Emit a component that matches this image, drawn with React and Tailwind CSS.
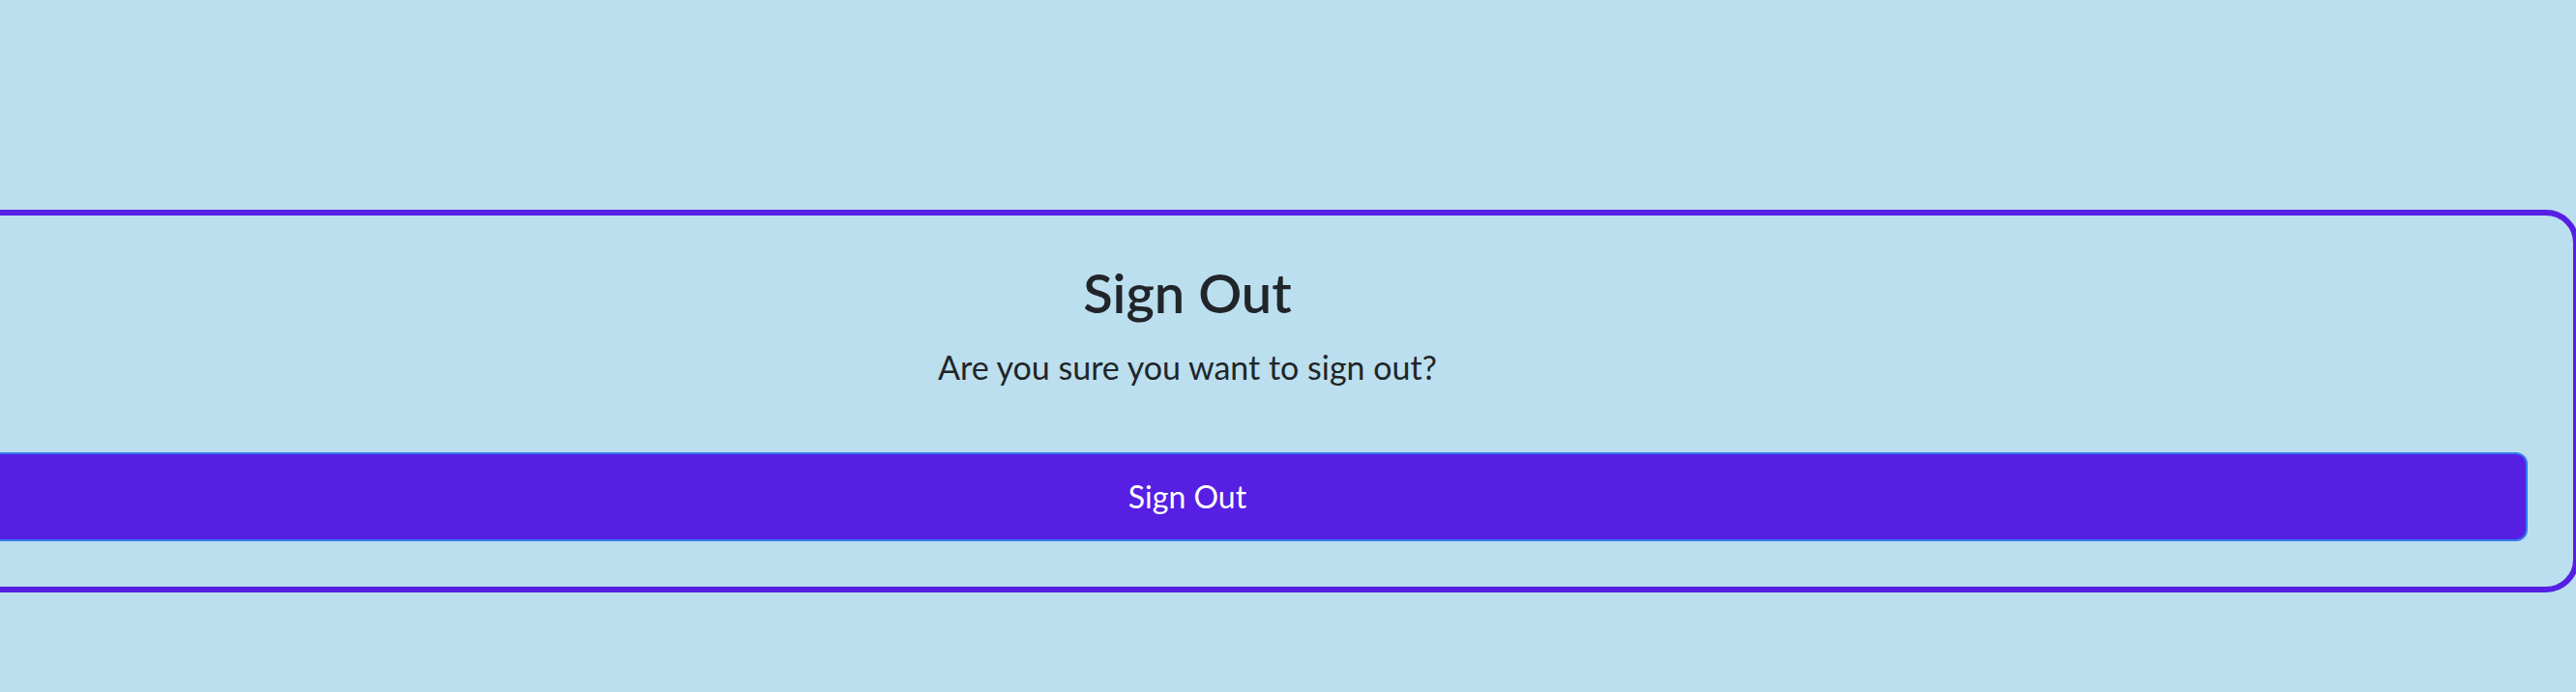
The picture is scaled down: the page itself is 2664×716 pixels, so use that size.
import React from 'react';

const SignOutCard = ({ onConfirm }) => {
  return (
    <div className="ml-[-211px] w-[2878px] h-[396px] border-[6px] border-[#561fe3] rounded-[34px] pt-[49px] px-[47px] pb-[47px] flex flex-col">
      <div className="flex flex-col items-center">
        <h2 className="text-[56px] leading-[62px] font-semibold text-[#212529]">Sign Out</h2>
        <p className="mt-[21px] text-[34px] leading-[49px] text-[#212529]">Are you sure you want to sign out?</p>
      </div>
      <button
        className="mt-auto h-[92px] w-full rounded-[12px] border-2 border-[#3479f0] bg-[#561fe3] text-white text-[32px] flex items-center justify-center"
        onClick={onConfirm}
      >
        Sign Out
      </button>
    </div>
  );
};

export default function App() {
  return (
    <div className="w-full h-[716px] overflow-hidden bg-[#bbdfee] pt-[217px] font-['Lato',sans-serif]">
      <SignOutCard onConfirm={() => {}} />
    </div>
  );
}
